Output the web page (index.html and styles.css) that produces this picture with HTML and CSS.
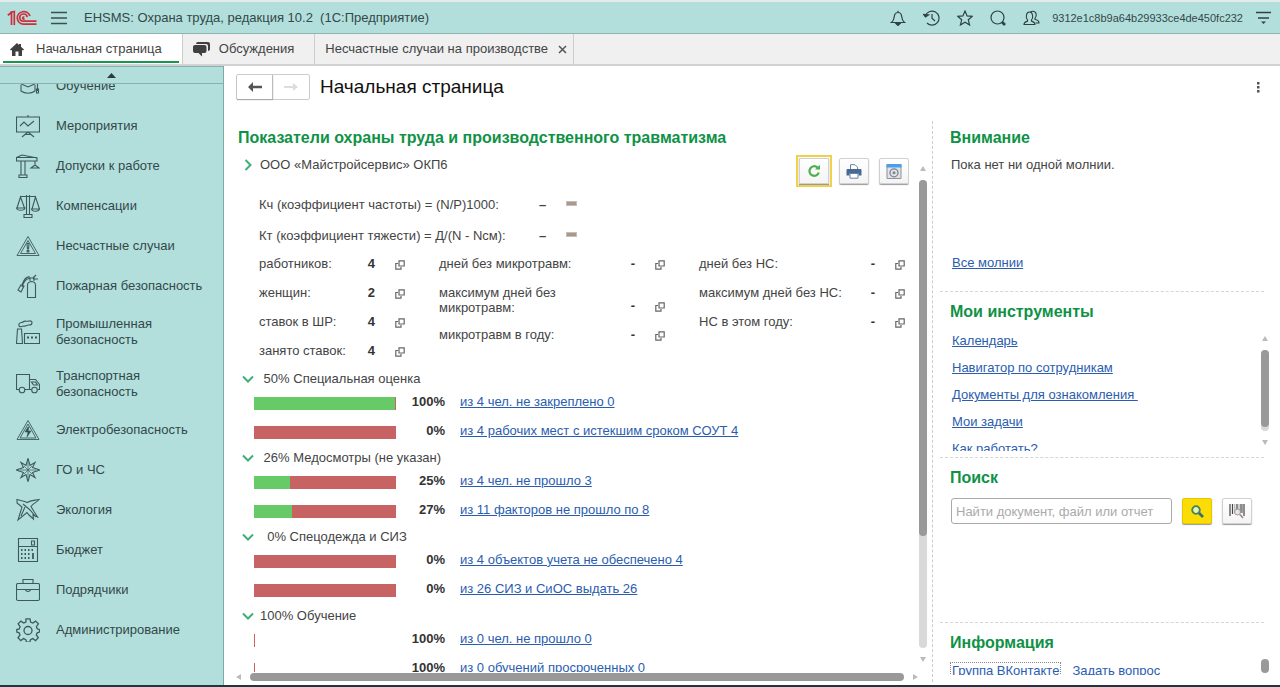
FILE: index.html
```
<!DOCTYPE html>
<html lang="ru">
<head>
<meta charset="utf-8">
<title>EHSMS: Охрана труда</title>
<link rel="stylesheet" href="styles.css">
</head>
<body>
<svg class="defs" aria-hidden="true">
  <symbol id="open" viewBox="0 0 10 10"><path d="M4 .8h5.2V6H4zM3 3.5H.8v5.7H6V7" fill="none" stroke="#666" stroke-width="1.2"/></symbol>
  <symbol id="down" viewBox="0 0 12 8"><path d="M1 1.5l5 5 5-5" fill="none" stroke="#3fae78" stroke-width="2"/></symbol>
</svg>
<div class="app">
  <header class="topbar">
    <svg class="logo" viewBox="0 0 30 16" fill="none" stroke="#cf2e3c" stroke-width="1.700"><path d="M.8 5.200L4.500 2.500V15M3 2.500L7.300 1.500V15M23 6A6.500 6.300 0 1 0 16.500 14.200H29.500M20.300 7a3.800 3.600 0 1 0-3.800 4.200H29.500M17.500 8.500a1 1 0 1 1-.2-1.200"/></svg>
    <button class="icon-btn menu" aria-label="Меню"><svg width="16" height="14" viewBox="0 0 16 14" stroke="#3c4f4f" stroke-width="1.400"><path d="M0 1.500h16M0 7h16M0 12.500h16"/></svg></button>
    <h1 class="app-title">EHSMS: Охрана труда, редакция 10.2&nbsp; (1С:Предприятие)</h1>
    <div class="tools">
      <button class="icon-btn" aria-label="Уведомления"><svg width="16" height="16" viewBox="0 0 16 16" fill="none" stroke="#2f4244" stroke-width="1.200"><path d="M1.500 12.500c2-1.500 2.500-3 2.800-6C4.600 3.500 6 2.500 8 2.500s3.400 1 3.700 4c.3 3 .8 4.500 2.800 6zM8 2.500V.8"/><path d="M6 13.500h4l-2 2z" fill="#2f4244"/></svg></button>
      <button class="icon-btn" aria-label="История"><svg width="17" height="16" viewBox="0 0 17 16" fill="none" stroke="#2f4244" stroke-width="1.200"><path d="M2.500 5.500A7 7 0 1 1 4 13M9 4v4.300l3 2.700"/><path d="M.5 4.500l2 2.500 3-2z" fill="#2f4244"/></svg></button>
      <button class="icon-btn" aria-label="Избранное"><svg width="16" height="16" viewBox="0 0 16 16" fill="none" stroke="#2f4244" stroke-width="1.200"><path d="M8 1l2.100 4.900 5.200.4-4 3.500 1.300 5.200L8 12.200 3.400 15l1.300-5.200-4-3.500 5.200-.4z"/></svg></button>
      <button class="icon-btn" aria-label="Поиск"><svg width="16" height="16" viewBox="0 0 16 16" fill="none" stroke="#2f4244"><circle cx="7.500" cy="7.500" r="6.500" stroke-width="1.200"/><path d="M12 12l3 3" stroke-width="2.600"/></svg></button>
      <button class="user"><svg width="17" height="16" viewBox="0 0 17 16" fill="none" stroke="#2f4244" stroke-width="1.100"><path d="M1 14.500c0-2.500 1.500-2.700 3.500-3.300v-1.400C2.500 7.500 3 2 6.500 2s4 5.500 2 7.800v1.400c2 .6 3.500.8 3.500 3.300z"/><path d="M7.500 1.800C11 .2 14 2.500 13 6.200c-.2 1-.8 1.600-1 2v1.200c2 .6 4 .8 4 3.600h-3.500"/></svg><span>9312e1c8b9a64b29933ce4de450fc232</span></button>
      <button class="icon-btn" aria-label="Настройки"><svg width="15" height="14" viewBox="0 0 15 14" stroke="#2f4244" stroke-width="1.300"><path d="M0 1.500h15M2 7h11"/><path d="M5 10.500h5L7.500 13z" fill="#2f4244" stroke="none"/></svg></button>
    </div>
  </header>

  <nav class="tabs">
    <a class="tab active" href="#"><svg width="14" height="13" viewBox="0 0 14 13" fill="#404040"><path d="M7 0L0 6.500l1 1L2 7v6h3.500V8.500h3V13H12V7l1 .5 1-1-3-2.800V1H9v1z"/></svg><span>Начальная страница</span></a>
    <a class="tab talks" href="#"><svg width="17" height="15" viewBox="0 0 17 15" fill="#404040"><path d="M5 0h10q2 0 2 2v5q0 2-2 2V4q0-2-2-2H3q0-2 2-2z"/><path d="M2 3h9.500q2 0 2 2v4q0 2-2 2H9v3.500L5.500 11H2q-2 0-2-2V5q0-2 2-2z"/></svg><span>Обсуждения</span></a>
    <a class="tab last" href="#"><span>Несчастные случаи на производстве</span><svg width="9" height="9" viewBox="0 0 9 9" stroke="#555" stroke-width="1.500"><path d="M1 1l7 7M8 1L1 8"/></svg></a>
  </nav>

  <div class="workspace">
    <aside class="sidebar">
      <button class="scroll-up" aria-label="Вверх"><svg width="9" height="5" viewBox="0 0 9 5"><path d="M0 5l4.500-5L9 5z" fill="#263c3e"/></svg></button>
      <nav class="sections">
        <a href="#"><svg viewBox="0 0 24 24"><path d="M1 8l11-5 11 5-11 5zM5 10v7c4 3 10 3 14 0v-7M21.500 9v8"/><path d="M20.500 15h2v4h-2z"/></svg><span>Обучение</span></a>
        <a href="#"><svg viewBox="0 0 24 24"><path d="M.5 3h23v15H.5zM12 1v2M4 12l4-4 4 4 6-5M12 18l-6 5M12 18l6 5M9 20.500h6"/></svg><span>Мероприятия</span></a>
        <a href="#"><svg viewBox="0 0 24 24"><path d="M.5 3.500L6 1l15 3v3H.5zM0 3.500h21M5 7v14M9 7v14M3 21h8v2.500H3zM19 7v4M15 14h8l-4-3z"/></svg><span>Допуски к работе</span></a>
        <a href="#"><svg viewBox="0 0 24 24"><path d="M4 2.500h16M10.500 1v19M13.500 1v19M8 20.500h8v3H8zM4.500 3L1 14h7.500zM19.500 3L16 15h7.500zM.5 14h8.500c-.5 3-8 3-8.500 0zM15.500 15h8c-.5 3-7.500 3-8 0z"/></svg><span>Компенсации</span></a>
        <a href="#"><svg viewBox="0 0 24 24"><path d="M12 2.500L23 21.500H1zM12 6.500L19.500 19.500h-15z" stroke-width=".9"/><path d="M11 10q1-1.500 2 0L12.500 15h-1zM11.200 16.500h1.600v1.500h-1.600z"/></svg><span>Несчастные случаи</span></a>
        <a href="#"><svg viewBox="0 0 24 24"><path d="M11.500 23.500V11q0-3 4-3.500 4 .5 4 3.500v12.500zM14 7V4h4v3M14 4.500C10 4 8 7 6 13M14 3c-3-.5-6 2-8 8M17 4l3-3M17 5h5M5 11l3 1-3 6-3-2z"/></svg><span>Пожарная безопасность</span></a>
        <a class="double" href="#"><svg viewBox="0 0 24 24"><path d="M.5 23.500L1.500 9h4l1 14.500zM8.500 13.500h15v10h-15zM3 6C2 2 6 3 7 2c2-2 4 0 6-1 4-1 4 4 0 4-3 0-4 2-6 1-1 0-2 2-4 0z"/><path d="M11 17.500h2m2 0h2m2 0h2" stroke-width="2"/></svg><span>Промышленная безопасность</span></a>
        <a class="double" href="#"><svg viewBox="0 0 24 24"><path d="M3 17.500H.5v-15h13v15H9M13.500 7.500h6l4 5v5h-2M15.500 17.500h-2M15.500 10h4l2 3h-4z"/><circle cx="6" cy="18" r="2.800"/><circle cx="18.500" cy="18" r="2.800"/></svg><span>Транспортная безопасность</span></a>
        <a href="#"><svg viewBox="0 0 24 24"><path d="M12 2.500L23 21.500H1zM12 6L20 20H4z" stroke-width=".9"/><path d="M12 9l-3 5h3l-1 5 4-6h-3l1-4z" fill="#2f4b4e" stroke-width=".6"/></svg><span>Электробезопасность</span></a>
        <a href="#"><svg viewBox="0 0 24 24"><path d="M12 .5l2 7 5-3-2.500 5 7 2.500-7 2.500 2.500 5-5-3-2 7-2-7-5 3 2.500-5-7-2.500 7-2.500L5 4.500l5 3z"/><path d="M12 4v16M4 12h16M8 8l8 8M16 8l-8 8" stroke-width=".7"/></svg><span>ГО и ЧС</span></a>
        <a href="#"><svg viewBox="0 0 24 24"><path d="M1 1.500c4 1.500 7 1 10 3 4-2.500 8-2 12-3-2 3-6 3.500-8 7l3 5 3.500 5.500-4.500-2 .5 4-4.500-4-2-2.500L2 22 6 9 1 5zM7 6l7 6 6 7M9 9l-4 9" /></svg><span>Экология</span></a>
        <a href="#"><svg viewBox="0 0 24 24"><path d="M2.500.5h19v23h-19zM2.500 8.500h19M15.500 3h3v4h-3z"/><path d="M5 12h1.500m2 0h1.500m2 0h1.500m2 0h1.500M5 16h1.500m2 0h1.500m2 0h1.500M5 20h1.500m2 0h1.500m2 0h1.500M17 15v6" stroke-width="1.800"/></svg><span>Бюджет</span></a>
        <a href="#"><svg viewBox="0 0 24 24"><path d="M2 5.500h20q1.500 0 1.500 1.500v14q0 1.500-1.500 1.500H2Q.5 22.500.5 21V7q0-1.500 1.500-1.500zM7 5.500v-4h10v4M.5 11.500h23M9 11.500q3 4 6 0"/></svg><span>Подрядчики</span></a>
        <a href="#"><svg viewBox="0 0 24 24"><path d="M10 .8h4l.6 3.300 2.200 1 2.800-2 2.800 2.800-2 2.800 1 2.200 2.100.6v2.500l-2.300.8-.9 2.200 2 2.800-2.800 2.800-2.700-2-2.300 1-.6 2.600h-3.400l-.7-2.600-2.300-1-2.700 2-2.800-2.800 2-2.800-.9-2.200-2.300-.8v-2.500l2.400-.6.9-2.200-2-2.800 2.800-2.800 2.800 2 2.200-1z" stroke-width="1.300"/><circle cx="12" cy="12.500" r="4" stroke-width="1.300"/></svg><span>Администрирование</span></a>
      </nav>
    </aside>

    <main class="page">
      <div class="page-head">
        <div class="history">
          <button aria-label="Назад"><svg width="14" height="10" viewBox="0 0 14 10"><path d="M5 0v3.800h9v2.400H5V10L0 5z" fill="#555"/></svg></button>
          <button aria-label="Вперед" disabled><svg width="14" height="10" viewBox="0 0 14 10"><path d="M9 1v3H0v2h9v3l5-4z" fill="#ddd"/></svg></button>
        </div>
        <h2 class="page-title">Начальная страница</h2>
        <button class="icon-btn more" aria-label="Еще"><svg width="3" height="11" viewBox="0 0 3 11" fill="#555"><path d="M0 0h2.500v2.500H0zM0 4h2.500v2.500H0zM0 8h2.500v2.500H0z"/></svg></button>
      </div>

      <div class="columns">
        <section class="indicators">
          <h3>Показатели охраны труда и производственного травматизма</h3>
          <div class="scroller">
            <div class="viewport">
              <div class="org">
                <button class="toggle org-toggle"><svg width="8" height="12" viewBox="0 0 8 12"><path d="M1.500 1l5 5-5 5" fill="none" stroke="#3fae78" stroke-width="2"/></svg><span>ООО «Майстройсервис» ОКП6</span></button>
                <div class="actions">
                  <button class="tool focused" aria-label="Обновить"><svg width="14" height="14" viewBox="0 0 14 14"><path d="M10.500 3.500A4.800 4.800 0 1 0 11.800 8.500" fill="none" stroke="#4bb04f" stroke-width="2.200"/><path d="M8 5.500h5V.8z" fill="#4bb04f"/></svg></button>
                  <button class="tool" aria-label="Печать"><svg width="16" height="15" viewBox="0 0 16 15"><path d="M4.500 5V.7h4.500l2.500 2.500V5" fill="#fff" stroke="#6b83a3"/><path d="M1.500 5h13q1 0 1 1v5.500h-3v-2h-9v2h-3V6q0-1 1-1z" fill="#456a94"/><path d="M4 9.500h8v4.700H4z" fill="#fff" stroke="#6b83a3"/></svg></button>
                  <button class="tool" aria-label="Настройка"><svg width="16" height="15" viewBox="0 0 16 15"><path d="M1 1h14v13.500H1z" fill="#dfe3e8" stroke="#8b929b"/><path d="M.5 0h15v3.500H.5z" fill="#4d9ee8"/><circle cx="8" cy="8.800" r="4" fill="none" stroke="#7d858f" stroke-width="1.300"/><circle cx="8" cy="8.800" r="1.500" fill="#7d858f"/></svg></button>
                </div>
              </div>
              <dl class="rates">
                <div><dt>Кч (коэффициент частоты) = (N/P)1000:</dt><dd>–</dd><dd class="dash"></dd></div>
                <div><dt>Кт (коэффициент тяжести) = Д/(N - Nсм):</dt><dd>–</dd><dd class="dash"></dd></div>
              </dl>
              <div class="stats">
                <dl class="staff">
                  <div><dt>работников:</dt><dd>4</dd><dd><svg><use href="#open"/></svg></dd></div>
                  <div><dt>женщин:</dt><dd>2</dd><dd><svg><use href="#open"/></svg></dd></div>
                  <div><dt>ставок в ШР:</dt><dd>4</dd><dd><svg><use href="#open"/></svg></dd></div>
                  <div><dt>занято ставок:</dt><dd>4</dd><dd><svg><use href="#open"/></svg></dd></div>
                </dl>
                <dl class="micro">
                  <div><dt>дней без микротравм:</dt><dd>-</dd><dd><svg><use href="#open"/></svg></dd></div>
                  <div class="tall"><dt>максимум дней без<br>микротравм:</dt><dd>-</dd><dd><svg><use href="#open"/></svg></dd></div>
                  <div><dt>микротравм в году:</dt><dd>-</dd><dd><svg><use href="#open"/></svg></dd></div>
                </dl>
                <dl class="accidents">
                  <div><dt>дней без НС:</dt><dd>-</dd><dd><svg><use href="#open"/></svg></dd></div>
                  <div><dt>максимум дней без НС:</dt><dd>-</dd><dd><svg><use href="#open"/></svg></dd></div>
                  <div><dt>НС в этом году:</dt><dd>-</dd><dd><svg><use href="#open"/></svg></dd></div>
                </dl>
              </div>
              <div class="group">
                <button class="toggle"><svg width="12" height="8"><use href="#down"/></svg><span>&nbsp;50% Специальная оценка</span></button>
                <div class="measure"><div class="bar"><i style="width:99%"></i></div><b>100%</b><a href="#">из 4 чел. не закреплено 0</a></div>
                <div class="measure"><div class="bar"></div><b>0%</b><a href="#">из 4 рабочих мест с истекшим сроком СОУТ 4</a></div>
              </div>
              <div class="group">
                <button class="toggle"><svg width="12" height="8"><use href="#down"/></svg><span>&nbsp;26% Медосмотры (не указан)</span></button>
                <div class="measure"><div class="bar"><i style="width:25%"></i></div><b>25%</b><a href="#">из 4 чел. не прошло 3</a></div>
                <div class="measure"><div class="bar"><i style="width:27%"></i></div><b>27%</b><a href="#">из 11 факторов не прошло по 8</a></div>
              </div>
              <div class="group">
                <button class="toggle"><svg width="12" height="8"><use href="#down"/></svg><span>&nbsp;&nbsp;0% Спецодежда и СИЗ</span></button>
                <div class="measure"><div class="bar"></div><b>0%</b><a href="#">из 4 объектов учета не обеспечено 4</a></div>
                <div class="measure"><div class="bar"></div><b>0%</b><a href="#">из 26 СИЗ и СиОС выдать 26</a></div>
              </div>
              <div class="group">
                <button class="toggle"><svg width="12" height="8"><use href="#down"/></svg><span>100% Обучение</span></button>
                <div class="measure"><div class="bar empty"></div><b>100%</b><a href="#">из 0 чел. не прошло 0</a></div>
                <div class="measure"><div class="bar empty"></div><b>100%</b><a href="#">из 0 обучений просроченных 0</a></div>
              </div>
            </div>
            <div class="vscroll"><span class="arrow up"></span><div class="track"><div class="thumb long"></div></div><span class="arrow down"></span></div>
            <div class="hscroll"><span class="arrow left"></span><div class="track"><div class="thumb"></div></div><span class="arrow right"></span></div>
          </div>
        </section>

        <div class="side">
          <section class="alerts">
            <h3>Внимание</h3>
            <p>Пока нет ни одной молнии.</p>
            <a href="#">Все молнии</a>
          </section>
          <section class="instruments">
            <h3>Мои инструменты</h3>
            <div class="side-scroll">
              <ul>
                <li><a href="#">Календарь</a></li>
                <li><a href="#">Навигатор по сотрудникам</a></li>
                <li><a href="#">Документы для ознакомления&nbsp;</a></li>
                <li><a href="#">Мои задачи</a></li>
                <li><a href="#">Как работать?</a></li>
              </ul>
              <div class="vscroll"><span class="arrow up"></span><div class="track"><div class="thumb most"></div></div><span class="arrow down"></span></div>
            </div>
          </section>
          <section class="search">
            <h3>Поиск</h3>
            <form>
              <input type="text" aria-label="Поиск" placeholder="Найти документ, файл или отчет">
              <button type="button" class="tool find" aria-label="Найти"><svg width="13" height="13" viewBox="0 0 13 13" fill="none"><circle cx="5" cy="5" r="3.800" stroke="#43825a" stroke-width="1.800" fill="#e9f3b0"/><path d="M8 8l4 4" stroke="#356e74" stroke-width="2.600"/></svg></button>
              <button type="button" class="tool" aria-label="Штрихкод"><svg width="16" height="16" viewBox="0 0 16 16" fill="none"><path d="M1 1v12M3.500 1v10M8 1v9M12 1v9M15 1v12" stroke="#444" stroke-width="1.200"/><path d="M5.800 1v9M10 1v9M13.500 1v9" stroke="#666" stroke-width=".6"/><circle cx="8.500" cy="9" r="3" fill="#dfe6ef" stroke="#999"/><path d="M11 11.500l3 3.500" stroke="#b08b7a" stroke-width="1.800"/></svg></button>
            </form>
          </section>
          <section class="info">
            <h3>Информация</h3>
            <div class="side-scroll">
              <div class="info-links"><a class="boxed" href="#">Группа ВКонтакте</a><a href="#">Задать вопрос</a></div>
              <div class="mini-thumb"></div>
            </div>
          </section>
        </div>
      </div>
    </main>
  </div>
</div>
</body>
</html>
```
FILE: styles.css
```
* { box-sizing: border-box; }

body, h1, h2, h3, p, dl, dd, ul { margin: 0; padding: 0; }

body {
  font: 13px/16px "Liberation Sans", Arial, sans-serif;
  color: #444;
  background: #fff;
}

button {
  font: inherit;
  color: inherit;
  padding: 0;
  border: 0;
  background: none;
}

a { color: #2a5db0; }
svg { flex: none; display: block; }
.defs { display: none; }

.app {
  display: flex;
  flex-direction: column;
  height: 100vh;
  overflow: hidden;
  border-top: 2px solid #e4eceb;
  border-bottom: 2px solid #1d3640;
}

/* Top bar */
.topbar {
  display: flex;
  align-items: center;
  height: 32px;
  flex: none;
  padding: 0 9px 0 7px;
  background: #b2dfdb;
  border-bottom: 1px solid #8fb5b3;
}
.logo { width: 30px; height: 16px; }
.icon-btn { display: flex; align-items: center; justify-content: center; }
.menu { margin: 0 17px 0 14px; }
.app-title { font-size: 13px; font-weight: 400; color: #32484a; }
.tools { display: flex; align-items: center; gap: 17px; margin-left: auto; color: #32484a; }
.user { display: flex; align-items: center; gap: 12px; font-size: 11px; margin-right: -4px; }

/* Open windows */
.tabs {
  display: flex;
  flex: none;
  height: 32px;
  background: #f0f0f0;
  border-bottom: 2px solid #d2d2d2;
}
.tab {
  display: flex;
  align-items: center;
  padding: 0 20px 0 10px;
  border-right: 1px solid #ccc;
  color: #444;
  text-decoration: none;
}
.tab.active {
  gap: 12px;
  background: #fff linear-gradient(#14994f, #14994f) 3px 27px / calc(100% - 6px) 2px no-repeat;
}
.talks { gap: 9px; }
.last { gap: 10px; padding: 0 6px 0 10px; }

.workspace { display: flex; flex: 1; min-height: 0; }

/* Sections panel */
.sidebar {
  display: flex;
  flex-direction: column;
  width: 224px;
  flex: none;
  background: #b2dfdb;
  border-right: 1px solid #7fa9a8;
}
.scroll-up {
  display: flex;
  align-items: center;
  justify-content: center;
  height: 18px;
  flex: none;
  border: 1px solid #86b1af;
  border-width: 1px 0;
}
.sections { flex: 1; min-height: 0; overflow: hidden; }
.sections a {
  display: flex;
  align-items: center;
  gap: 16px;
  min-height: 40px;
  padding: 0 8px 0 16px;
  color: #32484a;
  text-decoration: none;
}
.sections a:first-child { margin-top: -18px; }
.sections a.double { min-height: 52px; padding-right: 48px; }
.sections svg { width: 24px; height: 24px; fill: none; stroke: #3d595b; stroke-width: 1.100; }

/* Page */
.page { display: flex; flex-direction: column; flex: 1; min-width: 0; padding: 8px 16px 3px 12px; }
.page-head { display: flex; align-items: center; height: 26px; flex: none; margin-bottom: 21px; }
.history { display: flex; margin-right: 10px; border: 1px solid #ccc; border-radius: 2px; }
.history button { display: flex; align-items: center; justify-content: center; width: 36px; height: 24px; }
.history button:first-child { border-right: 1px solid #bbb; box-shadow: 0 1px 1px #aaa; }
.page-title { font-size: 19px; line-height: 24px; font-weight: 400; color: #111; }
.more { margin: 0 4px 0 auto; }

.columns { display: grid; grid-template-columns: minmax(0, 1fr) 331px; flex: 1; min-height: 0; }
h3 { font-size: 16px; line-height: 20px; color: #0f9246; }

.indicators { display: flex; flex-direction: column; min-height: 0; padding-top: 7px; border-right: 1px dashed #ccc; }
.indicators h3 { padding-left: 2px; margin-bottom: 7px; }
.scroller {
  display: grid;
  grid-template: minmax(0, 1fr) 10px / minmax(0, 1fr) 10px;
  column-gap: 9px;
  flex: 1;
  min-height: 0;
  padding-right: 4px;
}
.viewport { overflow: hidden; }

.toggle { display: flex; align-items: center; gap: 6px; height: 20px; padding-left: 6px; text-align: left; }
.org { display: flex; align-items: flex-start; justify-content: space-between; height: 32px; }
.org-toggle { gap: 8px; padding-left: 8px; }
.actions { display: flex; gap: 10px; padding: 3px 0 0 3px; }
.tool {
  display: flex;
  align-items: center;
  justify-content: center;
  width: 30px;
  height: 26px;
  border: 1px solid #d0d0d0;
  border-radius: 2px;
  background: linear-gradient(#fff, #f4f4f4);
  box-shadow: 0 1px 1px #999;
}
.focused { outline: 2px solid #f0d24a; outline-offset: 1px; border-radius: 0; }

.rates { padding: 2px 0 1px 23px; }
.rates div { display: flex; align-items: center; height: 31px; }
.rates dt { width: 274px; }
.rates dd { width: 32px; padding-left: 6px; font-weight: 700; }
.rates .dash { width: 11px; height: 5px; padding: 0; background: #a8988f; border: 1px solid #c9bdb6; margin: 0 0 3px 1px; }

.stats { display: flex; justify-content: space-between; height: 117px; padding: 3px 4px 0 23px; }
.stats dl { display: flex; flex-direction: column; gap: 11px; }
.stats dl > div { display: grid; grid-template-columns: 1fr auto 10px; column-gap: 20px; align-items: end; line-height: 18px; white-space: nowrap; }
.stats .tall dt { padding-top: 1px; line-height: 15px; }
.stats dd { font-weight: 700; color: #333; }
.stats svg { width: 10px; height: 10px; margin-bottom: 3px; }
.staff { width: 146px; }
.micro { width: 226px; }
.accidents { width: 206px; }

.group { padding-bottom: 1px; }
.measure { display: grid; grid-template-columns: 142px 49px 1fr; align-items: center; height: 29px; padding-left: 18px; }
.measure b { text-align: right; padding-bottom: 4px; color: #333; }
.measure a { padding: 0 0 4px 15px; white-space: nowrap; }
.bar { display: flex; height: 13px; background: #c76363; }
.bar i { background: #66cb66; }
.bar.empty { width: 1px; }

/* Scroll bars */
.vscroll { display: flex; flex-direction: column; align-items: center; gap: 9px; padding: 11px 0 10px; }
.vscroll .track { flex: 1; width: 8px; border-radius: 4px; background: #d9d9d9; }
.thumb { height: 100%; border-radius: 4px; background: #999; }
.thumb.long { height: 76%; }
.thumb.most { height: 95%; }
.arrow { width: 0; height: 0; border: 3px solid transparent; flex: none; }
.arrow.up { border-top: 0; border-bottom: 5px solid #bbb; }
.arrow.down { border-bottom: 0; border-top: 5px solid #bbb; }
.arrow.left { border-left: 0; border-right: 5px solid #bbb; }
.arrow.right { border-right: 0; border-left: 5px solid #bbb; }
.hscroll { display: flex; align-items: center; gap: 9px; margin-right: -9px; }
.hscroll .track { flex: 1; height: 8px; }

/* Right column */
.side {
  display: grid;
  grid-template-rows: minmax(0, 170fr) minmax(0, 166fr) minmax(0, 165fr) minmax(0, 57fr);
  margin-left: 7px;
  padding-bottom: 3px;
  min-height: 0;
}
.side section { display: flex; flex-direction: column; min-height: 0; padding: 7px 0 0 10px; }
.side section + section { padding-top: 10px; border-top: 1px dashed #d5d5d5; }
.alerts { align-items: flex-start; }
.alerts p { padding: 9px 1px; }
.alerts a { margin: auto 0 20px 2px; }
.side-scroll { display: flex; justify-content: space-between; flex: 1; min-height: 0; margin-right: -6px; }
.side-scroll .vscroll { width: 10px; padding: 14px 0 12px; }
.instruments ul { list-style: none; padding: 11px 0 0 2px; overflow: hidden; margin-bottom: 6px; }
.instruments li { height: 27px; }
.search form { display: flex; gap: 10px; padding: 10px 12px 0 1px; }
.search input {
  flex: 1;
  min-width: 0;
  height: 26px;
  padding: 0 4px;
  border: 1px solid #aaa;
  border-radius: 3px;
  font: inherit;
  color: #444;
}
.search input::placeholder { color: #aaa; opacity: 1; }
.find { background: #fbdc05; border-color: #e6c800; }
.info-links { display: flex; gap: 11px; margin: 9px 0 4px; overflow: hidden; }
.info-links a { flex: none; padding-top: 1px; }
.info-links .boxed { height: 20px; padding: 0 1px; border: 1px dotted #888; border-bottom: 0; }
.mini-thumb { width: 8px; height: 14px; margin: 6px 1px 0; border-radius: 4px; background: #999; }
```
